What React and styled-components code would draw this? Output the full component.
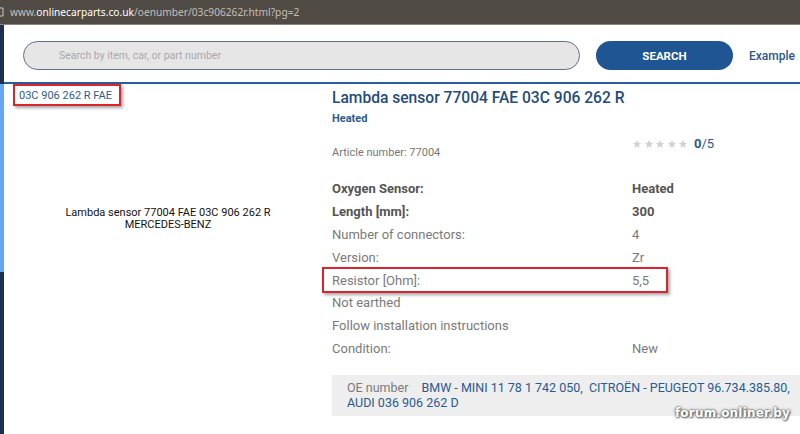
import React from "react";
import styled, { createGlobalStyle } from "styled-components";

const Global = createGlobalStyle`
  html, body { margin: 0; padding: 0; background: #fff; }
  body { width: 800px; height: 434px; overflow: hidden; font-family: Roboto, "Liberation Sans", sans-serif; }
`;

const Screen = styled.div`
  position: relative;
  width: 800px;
  height: 434px;
  display: flex;
  flex-direction: column;
  overflow: hidden;
`;

const TopBar = styled.div`
  height: 24px;
  flex: none;
  background: #514b45;
  border-bottom: 1px solid #8b857c;
  display: flex;
  align-items: center;
  gap: 6px;
  font-family: "Noto Sans", "Open Sans", sans-serif;
  font-size: 10.2px;
  color: #c4bfb8;
`;

const TabGlyph = styled.svg`
  width: 4px;
  height: 10px;
  flex: none;
`;

const Domain = styled.span`
  color: #ffffff;
`;

const Body = styled.div`
  flex: 1;
  display: flex;
  min-height: 0;
`;

const Edge = styled.div`
  width: 4px;
  flex: none;
  display: flex;
  flex-direction: column;
`;

const EdgeSeg = styled.div`
  height: ${(p) => p.$h}px;
  flex: ${(p) => (p.$h ? "none" : 1)};
  background: ${(p) => p.$c};
`;

const Main = styled.div`
  flex: 1;
  display: flex;
  flex-direction: column;
  min-width: 0;
`;

const Header = styled.div`
  height: 59px;
  flex: none;
  border-bottom: 2px solid #2b5c9b;
  display: flex;
  align-items: flex-start;
  padding: 16px 0 0 19px;
  box-sizing: border-box;
  gap: 16px;
`;

const SearchInput = styled.div`
  width: 557px;
  height: 29px;
  box-sizing: border-box;
  border: 1.5px solid #5f7088;
  border-radius: 15px;
  background: #e7e6e7;
  display: flex;
  align-items: center;
  padding-left: 35px;
  font-size: 10.5px;
  color: #a9a8aa;
  flex: none;
`;

const SearchButton = styled.div`
  width: 137px;
  height: 29px;
  border-radius: 15px;
  background: #1f5592;
  color: #fff;
  font-weight: 700;
  font-size: 11.5px;
  display: flex;
  align-items: center;
  justify-content: center;
  flex: none;
`;

const ExampleLink = styled.div`
  height: 29px;
  display: flex;
  align-items: center;
  font-size: 12px;
  font-weight: 500;
  color: #2c5888;
  white-space: nowrap;
  gap: 10px;
`;

const Content = styled.div`
  display: grid;
  grid-template-columns: 328px 1fr;
  flex: 1;
`;

const LeftCol = styled.div`
  display: flex;
  flex-direction: column;
  align-items: flex-start;
`;

const RefLabel = styled.div`
  margin: 0 0 0 9px;
  width: 108px;
  height: 22px;
  box-sizing: border-box;
  border: 2px solid #d9262c;
  box-shadow: 2px 2px 3px rgba(0, 0, 0, 0.35);
  padding: 0 0 0 4px;
  display: flex;
  align-items: center;
  font-size: 11px;
  color: #2d5b8f;
  white-space: nowrap;
`;

const ImageArea = styled.div`
  width: 100%;
  height: 226px;
  display: flex;
  align-items: center;
  justify-content: center;
  text-align: center;
  font-size: 11px;
  line-height: 12px;
  color: #111;
`;

const RightCol = styled.div`
  padding-top: 4px;
  display: flex;
  flex-direction: column;
  position: relative;
`;

const Title = styled.div`
  font-size: 15.6px;
  line-height: 20px;
  font-weight: 500;
  color: #1f4b7e;
  white-space: nowrap;
`;

const Sub = styled.div`
  margin-top: 4px;
  font-size: 11px;
  line-height: 14px;
  font-weight: 700;
  color: #2b5a90;
`;

const TwoCol = styled.div`
  display: grid;
  grid-template-columns: 300px 1fr;
  align-items: center;
  position: relative;
`;

const ArticleRow = styled(TwoCol)`
  margin-top: 10px;
  align-items: start;
`;

const Article = styled.div`
  margin-top: 9px;
  font-size: 11px;
  line-height: 16px;
  color: #777;
`;

const Rating = styled.div`
  display: flex;
  align-items: center;
  gap: 6px;
  font-size: 13px;
  line-height: 16px;
  color: #2a5a90;
`;

const Stars = styled.div`
  display: flex;
  gap: 1.5px;
`;

const Bold = styled.b`
  font-weight: 700;
`;

const Specs = styled.div`
  margin-top: 16px;
  display: flex;
  flex-direction: column;
`;

const SpecRow = styled(TwoCol)`
  height: 22.9px;
  font-size: 13px;
  color: ${(p) => (p.$strong ? "#555" : "#7a7a7a")};
  font-weight: ${(p) => (p.$strong ? 700 : 400)};
  white-space: nowrap;
  &::after {
    content: "";
    display: ${(p) => (p.$marked ? "block" : "none")};
    position: absolute;
    left: -10px;
    top: -1.5px;
    width: 346px;
    height: 26px;
    box-sizing: border-box;
    border: 2px solid #d9262c;
    box-shadow: 2px 2px 3px rgba(0, 0, 0, 0.35);
  }
`;

const OeBox = styled.div`
  margin-top: 15px;
  width: 490px;
  box-sizing: border-box;
  background: #eeeeee;
  padding: 5px 15px 6px 15px;
  font-size: 12.5px;
  line-height: 15px;
  color: #2b5a90;
`;

const OeLabel = styled.span`
  color: #7a7a7a;
  margin-right: 13px;
`;

const Watermark = styled.div`
  position: absolute;
  right: 10px;
  bottom: 14px;
  font-family: "DejaVu Sans", sans-serif;
  font-weight: 700;
  font-size: 12px;
  color: #fff;
  letter-spacing: 0.2px;
  text-shadow: 0 0 2px #555, 0 0 3px #777, 1px 1px 2px #666;
`;

const Star = () => (
  <svg width="10" height="10" viewBox="0 0 24 24">
    <path
      d="M12 2l2.9 6.9 7.1.6-5.4 4.7 1.7 7.3L12 17.6 5.7 21.5l1.7-7.3L2 9.5l7.1-.6z"
      fill="#d2d2d2"
    />
  </svg>
);

const specs = [
  { k: "Oxygen Sensor:", v: "Heated", strong: true },
  { k: "Length [mm]:", v: "300", strong: true },
  { k: "Number of connectors:", v: "4" },
  { k: "Version:", v: "Zr" },
  { k: "Resistor [Ohm]:", v: "5,5", marked: true },
  { k: "Not earthed", v: "" },
  { k: "Follow installation instructions", v: "" },
  { k: "Condition:", v: "New" },
];

export default function App() {
  return (
    <>
      <Global />
      <Screen>
        <TopBar>
          <TabGlyph viewBox="0 0 4 10">
            <path d="M0 1h3v8H0" fill="none" stroke="#cfcac2" strokeWidth="1" />
          </TabGlyph>
          <span>
            www.<Domain>onlinecarparts.co.uk</Domain>/oenumber/03c906262r.html?pg=2
          </span>
        </TopBar>
        <Body>
          <Edge>
            <EdgeSeg $h={59} $c="#1d2f4e" />
            <EdgeSeg $h={188} $c="#66a6f2" />
            <EdgeSeg $c="#1d2f4e" />
          </Edge>
          <Main>
            <Header>
              <SearchInput>Search by item, car, or part number</SearchInput>
              <SearchButton>SEARCH</SearchButton>
              <ExampleLink>
                Example <span>(</span>
              </ExampleLink>
            </Header>
            <Content>
              <LeftCol>
                <RefLabel>03C 906 262 R FAE</RefLabel>
                <ImageArea>
                  Lambda sensor 77004 FAE 03C 906 262 R
                  <br />
                  MERCEDES-BENZ
                </ImageArea>
              </LeftCol>
              <RightCol>
                <Title>Lambda sensor 77004 FAE 03C 906 262 R</Title>
                <Sub>Heated</Sub>
                <ArticleRow>
                  <Article>Article number: 77004</Article>
                  <Rating>
                    <Stars>
                      {[0, 1, 2, 3, 4].map((i) => (
                        <Star key={i} />
                      ))}
                    </Stars>
                    <span>
                      <Bold>0</Bold>/5
                    </span>
                  </Rating>
                </ArticleRow>
                <Specs>
                  {specs.map((s) => (
                    <SpecRow key={s.k} $strong={s.strong} $marked={s.marked}>
                      <span>{s.k}</span>
                      <span>{s.v}</span>
                    </SpecRow>
                  ))}
                </Specs>
                <OeBox>
                  <OeLabel>OE number</OeLabel>
                  BMW - MINI 11 78 1 742 050,&nbsp; CITROËN - PEUGEOT 96.734.385.80, AUDI 036 906 262 D
                </OeBox>
              </RightCol>
            </Content>
          </Main>
        </Body>
        <Watermark>forum.onliner.by</Watermark>
      </Screen>
    </>
  );
}
